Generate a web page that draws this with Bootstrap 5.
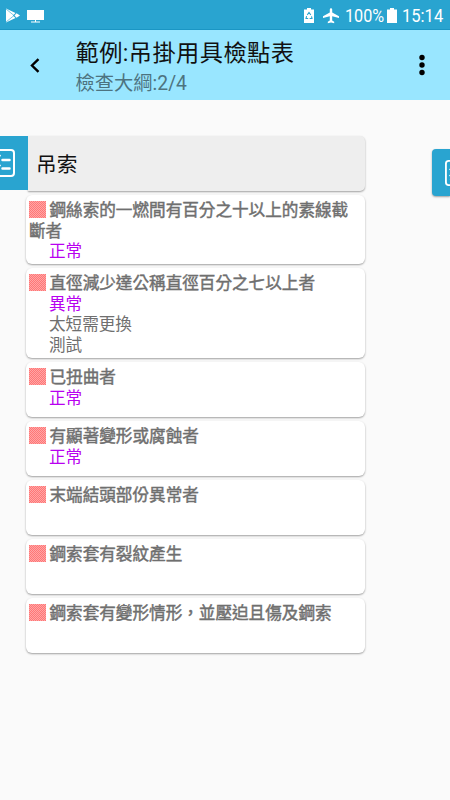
<!DOCTYPE html>
<html lang="zh-Hant">
<head>
<meta charset="utf-8">
<meta name="viewport" content="width=device-width, initial-scale=1">
<title>吊掛用具檢點表</title>
<link rel="stylesheet" href="https://cdn.jsdelivr.net/npm/bootstrap@5.3.0/dist/css/bootstrap.min.css">
<style>
body{font-family:Roboto,"Noto Sans CJK TC",sans-serif;background:#fafafa;width:450px;height:800px;overflow:hidden}
svg{display:block;flex:none}
.status-bar{height:30px;background:#29a4d0;border-bottom:1px solid #1b96c4;font-size:18px;line-height:30px;padding:2px 6px 0 5px}
.status-bar .squeeze{display:block;transform-origin:0 50%;white-space:nowrap}
.screen-icon{margin-left:7px}
.plane-icon{margin-left:9px}
.battery-icon{margin-left:2px}
.pct{width:40px;margin-left:6px}.pct .squeeze{transform:scaleX(.9)}
.clock{width:42px;margin-left:5px}.clock .squeeze{transform:scaleX(.92)}
.app-bar{height:70px;background:#99e6ff;color:#111}
.back-icon{margin:28px 0 0 29px}
.titles{margin:9px 0 0 34.500px}
.more-icon{margin:24px 25px 0 0}
.app-title{font-size:23.200px;line-height:28px;letter-spacing:.45px;white-space:nowrap}
.app-sub{font-size:19.300px;line-height:24px;margin-top:5px;color:#4d7380;white-space:nowrap}
.board{padding-top:36px;width:365px}
.shade{box-shadow:0 1px 2px rgba(0,0,0,.36)}
.group-head{height:55px;margin-bottom:4px}
.group-tab{width:28px;height:54px;background:#29a4d0;overflow:hidden;position:relative;z-index:1}
.tab-icon{margin-right:13px}
.group-name{background:#eee;border-radius:0 5px 5px 0;font-size:20.700px;color:#111;padding:4px 0 0 8px}
.check-list{padding-left:26px;gap:4px}
.check-item{background:#fff;border-radius:6px;min-height:55px;padding:6px 3px 2px;font-size:16.600px;line-height:20.500px;color:#6f6f6f}
.check-item.tall{min-height:69px;padding-bottom:1px}
.check-title{-webkit-text-stroke:.45px #6f6f6f}
.check-title svg{display:inline-block;vertical-align:-2px;margin-right:3.500px}
.check-more{padding-left:20px}
.result{color:#b800f0}
.next-tab{position:absolute;left:432px;top:149px;width:18px;height:47px;background:#29a4d0;border-radius:4px 0 0 4px;overflow:hidden;padding:11px 0 0 12px}
</style>
<script src="https://cdn.jsdelivr.net/npm/bootstrap@5.3.0/dist/js/bootstrap.bundle.min.js"></script>
</head>
<body class="position-relative">
<svg width="0" height="0" class="position-absolute">
  <defs>
    <pattern id="hatch" width="2" height="2" patternUnits="userSpaceOnUse"><rect width="2" height="2" fill="#ffa6a6"/><rect width="1" height="1" fill="#ff7676"/><rect x="1" y="1" width="1" height="1" fill="#ff7676"/></pattern>
    <symbol id="box" viewBox="0 0 17 17"><rect width="17" height="17" fill="url(#hatch)"/></symbol>
    <symbol id="ballot" viewBox="0 0 28 28"><rect x="1" y="1" width="26" height="26" rx="3" fill="none" stroke="#fff" stroke-width="2"/><path d="M15.500 11H22.500M15.500 19.500H22.500" stroke="#fff" stroke-width="2.500" stroke-linecap="round"/><path d="M5 9.500l2.500 2.500 6-6M5 16l6 6M13.500 16L5.500 22" fill="none" stroke="#fff" stroke-width="1.800"/></symbol>
  </defs>
</svg>

<div class="status-bar d-flex align-items-center text-white">
  <svg width="15" height="15" viewBox="0 0 15 15"><path d="M1 .5L10.500 5 8 7.500 10.500 10 1 14.500z" fill="#fff"/><path d="M1 1l8 6.500L1 14" fill="none" stroke="#29a4d0" stroke-width=".6"/><path d="M11.500 5.200L15 7.500l-3.500 2.300L9.500 7.500z" fill="#fff"/></svg>
  <svg class="screen-icon" width="17" height="14" viewBox="0 0 17 14"><path d="M0 1h17v10H0zM8 11h1v1.500h4V13.500H4V12.500h4z" fill="#fff"/></svg>
  <svg class="ms-auto" width="10" height="15" viewBox="0 0 10 15"><path d="M3 0h4v1.500h3V15H0V1.500h3z" fill="#fff"/><path d="M3.200 7L5 4.500 6.800 7M7.500 8.300L8 10.500H5.600M4.200 10.500H2L2.600 8.200" fill="none" stroke="#29a4d0" stroke-width="1.100"/></svg>
  <svg class="plane-icon" width="16" height="16" viewBox="2 2 20 20"><path fill="#fff" d="M22 14.500v-2.200l-8.500-4.800V3.800a1.500 1.500 0 0 0-3 0v3.700L2 12.300v2.200l8.500-2.300v5.300L8 19.300V21l4-1 4 1v-1.700l-2.500-1.800v-5.300z"/></svg>
  <div class="pct"><span class="squeeze">100%</span></div>
  <svg class="battery-icon" width="10" height="15" viewBox="0 0 10 15"><path d="M3 0h4v1.500h3V15H0V1.500h3z" fill="#fff"/></svg>
  <div class="clock"><span class="squeeze">15:14</span></div>
</div>

<header class="app-bar d-flex">
  <svg class="back-icon" width="12" height="15" viewBox="0 0 12 15"><path d="M9.500 1.200L3 7.500l6.500 6.300" fill="none" stroke="#000" stroke-width="2.400"/></svg>
  <div class="titles">
    <div class="app-title">範例:吊掛用具檢點表</div>
    <div class="app-sub">檢查大綱:2/4</div>
  </div>
  <svg class="more-icon ms-auto" width="6" height="22" viewBox="0 0 6 22"><circle cx="3" cy="3.500" r="2.700"/><circle cx="3" cy="11" r="2.700"/><circle cx="3" cy="18.500" r="2.700"/></svg>
</header>

<main class="board">
  <div class="group-head d-flex">
    <div class="group-tab d-flex align-items-center justify-content-end"><svg class="tab-icon" width="28" height="28"><use href="#ballot"/></svg></div>
    <div class="group-name shade flex-grow-1 d-flex align-items-center">吊索</div>
  </div>
  <div class="check-list d-flex flex-column">
    <div class="check-item tall shade"><div class="check-title"><svg width="17" height="17"><use href="#box"/></svg>鋼絲索的一燃間有百分之十以上的素線截斷者</div><div class="check-more result">正常</div></div>
    <div class="check-item shade"><div class="check-title"><svg width="17" height="17"><use href="#box"/></svg>直徑減少達公稱直徑百分之七以上者</div><div class="check-more result">異常</div><div class="check-more">太短需更換</div><div class="check-more">測試</div></div>
    <div class="check-item shade"><div class="check-title"><svg width="17" height="17"><use href="#box"/></svg>已扭曲者</div><div class="check-more result">正常</div></div>
    <div class="check-item shade"><div class="check-title"><svg width="17" height="17"><use href="#box"/></svg>有顯著變形或腐蝕者</div><div class="check-more result">正常</div></div>
    <div class="check-item shade"><div class="check-title"><svg width="17" height="17"><use href="#box"/></svg>末端結頭部份異常者</div></div>
    <div class="check-item shade"><div class="check-title"><svg width="17" height="17"><use href="#box"/></svg>鋼索套有裂紋產生</div></div>
    <div class="check-item shade"><div class="check-title"><svg width="17" height="17"><use href="#box"/></svg>鋼索套有變形情形，並壓迫且傷及鋼索</div></div>
  </div>
</main>
<div class="next-tab shade"><svg width="28" height="26"><use href="#ballot"/></svg></div>
</body>
</html>
